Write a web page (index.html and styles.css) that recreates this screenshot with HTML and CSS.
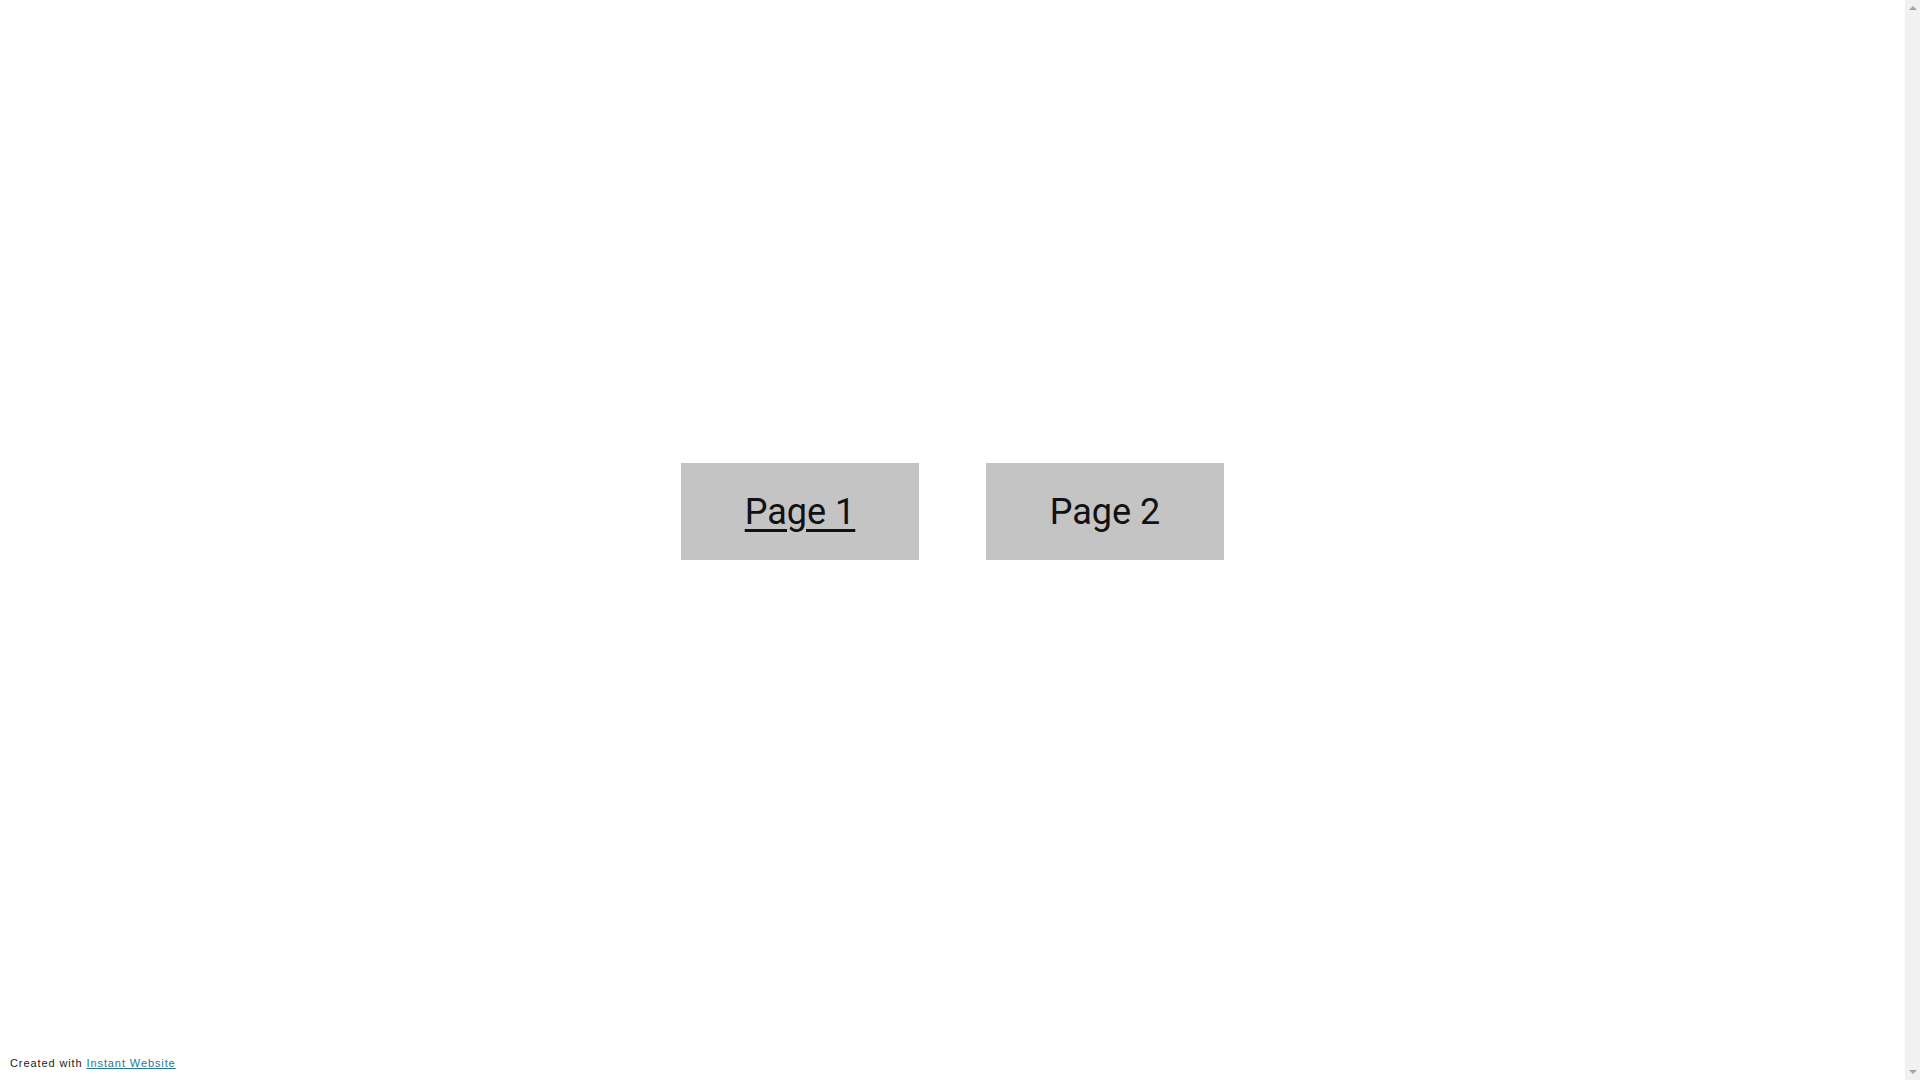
FILE: index.html
```html
<!DOCTYPE html>
<html lang="en">
<head>
<meta charset="utf-8">
<title>Pages</title>
<link rel="stylesheet" href="styles.css">
</head>
<body>
<div class="page">
  <main class="main">
    <nav class="tiles">
      <a class="tile tile-active" href="#">Page 1</a>
      <a class="tile" href="#">Page 2</a>
    </nav>
  </main>
  <footer class="footer">Created with <a class="footer-link" href="#">Instant Website</a></footer>
</div>
<div class="scrollbar" aria-hidden="true">
  <span class="arrow arrow-up"></span>
  <span class="arrow arrow-down"></span>
</div>
</body>
</html>
```
FILE: styles.css
```css
body {
  margin: 0;
  height: 100vh;
  display: flex;
  background: #fff;
  overflow: hidden;
}
.page {
  flex: 1;
  display: flex;
  flex-direction: column;
}
.main {
  flex: 1;
  display: flex;
  align-items: center;
  justify-content: center;
}
.tiles {
  display: flex;
  gap: 67px;
}
.tile {
  width: 238px;
  height: 97px;
  background: #c4c4c4;
  display: flex;
  align-items: center;
  justify-content: center;
  font-family: Roboto, "Noto Sans", sans-serif;
  font-size: 36px;
  color: #111;
  text-decoration: none;
}
.tile-active {
  text-decoration: underline;
  text-decoration-thickness: 3px;
  text-underline-offset: 5px;
}
.footer {
  height: 57px;
  box-sizing: border-box;
  padding: 33px 0 0 10px;
  font-family: "Liberation Sans", Arial, sans-serif;
  font-size: 11px;
  line-height: 14px;
  letter-spacing: 0.9px;
  color: #222;
}
.footer-link {
  color: #23799a;
  text-decoration: underline;
}
.scrollbar {
  width: 15px;
  background: #f1f1f1;
  display: flex;
  flex-direction: column;
  justify-content: space-between;
  align-items: center;
  padding: 6px 0;
  box-sizing: border-box;
}
.arrow {
  width: 0;
  height: 0;
  border-left: 4px solid transparent;
  border-right: 4px solid transparent;
}
.arrow-up {
  border-bottom: 4px solid #a3a3a3;
}
.arrow-down {
  border-top: 4px solid #a3a3a3;
}
```
